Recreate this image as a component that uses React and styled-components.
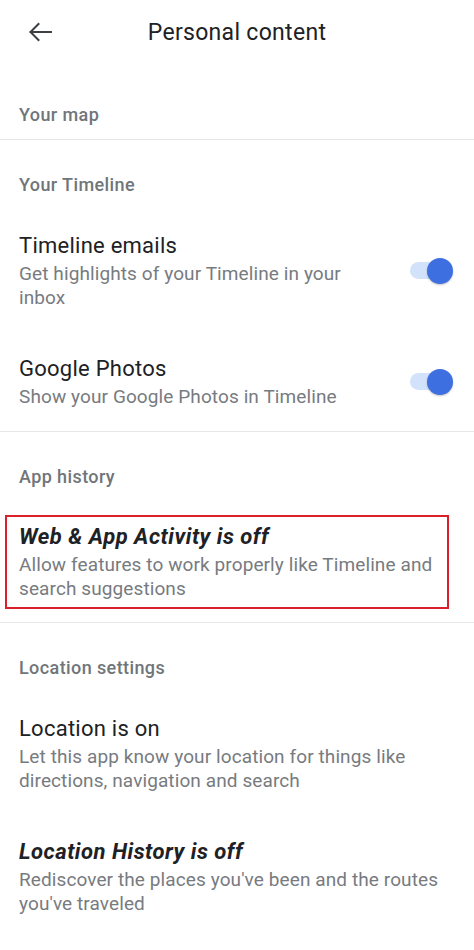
import React from "react";
import styled, { createGlobalStyle } from "styled-components";

const Global = createGlobalStyle`
  html, body { margin: 0; padding: 0; background: #ffffff; }
  body { font-family: Roboto, "Noto Sans", Arial, sans-serif; -webkit-font-smoothing: antialiased; }
  * { box-sizing: border-box; }
`;

const Page = styled.div`
  width: 474px;
  min-height: 950px;
  background: #fff;
  overflow: hidden;
`;

const AppBar = styled.header`
  height: 64px;
  display: grid;
  grid-template-columns: 1fr auto 1fr;
  align-items: center;
  margin-bottom: 7px;
`;

const BackButton = styled.button`
  justify-self: start;
  margin-left: 28px;
  width: 24px;
  height: 24px;
  padding: 0;
  border: 0;
  background: none;
  display: flex;
  align-items: center;
  justify-content: center;
  color: #3c4043;
`;

const Title = styled.h1`
  margin: 0;
  font-family: Roboto, sans-serif;
  font-weight: 400;
  font-size: 23px;
  color: #202124;
  letter-spacing: 0.3px;
`;

const SectionHeader = styled.div`
  padding: ${(p) => (p.$first ? "32px" : "33px")} 19px 12px;
  font-size: 18px;
  line-height: 24px;
  font-weight: 500;
  letter-spacing: 0.4px;
  color: #70757a;
`;

const Divider = styled.hr`
  margin: 0;
  border: 0;
  border-top: 1px solid #e6e6e6;
`;

const Item = styled.div`
  display: flex;
  align-items: center;
  gap: 24px;
  padding: 22.5px ${(p) => (p.$toggle ? "21px" : "16px")} 22.5px 19px;
`;

const HighlightBox = styled.div`
  margin: 14px 25px 13px 5px;
  padding: 6px 4px 6px 12px;
  border: 2px solid #d9202b;
`;

const TextCol = styled.div`
  flex: 1;
  min-width: 0;
`;

const ItemTitle = styled.div`
  font-size: 22px;
  line-height: 28px;
  color: #202124;
  margin-bottom: 2px;
  font-weight: ${(p) => (p.$off ? 700 : 400)};
  font-style: ${(p) => (p.$off ? "italic" : "normal")};
  letter-spacing: ${(p) => (p.$off ? "0.5px" : "0.25px")};
`;

const ItemSub = styled.div`
  font-size: 19px;
  line-height: 24px;
  letter-spacing: 0.1px;
  color: #777b80;
`;

const Toggle = styled.div`
  position: relative;
  flex: none;
  width: 44px;
  height: 26px;
  display: flex;
  align-items: center;
`;

const Track = styled.div`
  width: 40px;
  height: 17px;
  margin-left: 1px;
  border-radius: 9px;
  background: #d3e2fb;
`;

const Thumb = styled.div`
  position: absolute;
  right: 0;
  top: 0;
  width: 26px;
  height: 26px;
  border-radius: 50%;
  background: #3e6fe0;
  box-shadow: 0 1px 2px rgba(0, 0, 0, 0.25);
`;

const ArrowIcon = () => (
  <svg width="24" height="24" viewBox="0 0 24 24" fill="none">
    <path
      d="M23 12H2.5M10.5 4L2.5 12L10.5 20"
      stroke="currentColor"
      strokeWidth="2"
      strokeLinecap="square"
      strokeLinejoin="miter"
    />
  </svg>
);

const Switch = () => (
  <Toggle>
    <Track />
    <Thumb />
  </Toggle>
);

const Entry = ({ title, sub, off, toggle }) => (
  <Item $toggle={toggle}>
    <TextCol>
      <ItemTitle $off={off}>{title}</ItemTitle>
      <ItemSub>{sub}</ItemSub>
    </TextCol>
    {toggle && <Switch />}
  </Item>
);

export default function App() {
  return (
    <Page>
      <Global />
      <AppBar>
        <BackButton aria-label="Back">
          <ArrowIcon />
        </BackButton>
        <Title>Personal content</Title>
        <span />
      </AppBar>

      <SectionHeader $first>Your map</SectionHeader>
      <Divider />

      <SectionHeader>Your Timeline</SectionHeader>
      <Entry
        title="Timeline emails"
        sub="Get highlights of your Timeline in your inbox"
        toggle
      />
      <Entry
        title="Google Photos"
        sub="Show your Google Photos in Timeline"
        toggle
      />
      <Divider />

      <SectionHeader>App history</SectionHeader>
      <HighlightBox>
        <ItemTitle $off>Web &amp; App Activity is off</ItemTitle>
        <ItemSub>
          Allow features to work properly like Timeline and search suggestions
        </ItemSub>
      </HighlightBox>
      <Divider />

      <SectionHeader>Location settings</SectionHeader>
      <Entry
        title="Location is on"
        sub="Let this app know your location for things like directions, navigation and search"
      />
      <Entry
        title="Location History is off"
        sub="Rediscover the places you've been and the routes you've traveled"
        off
      />
    </Page>
  );
}
